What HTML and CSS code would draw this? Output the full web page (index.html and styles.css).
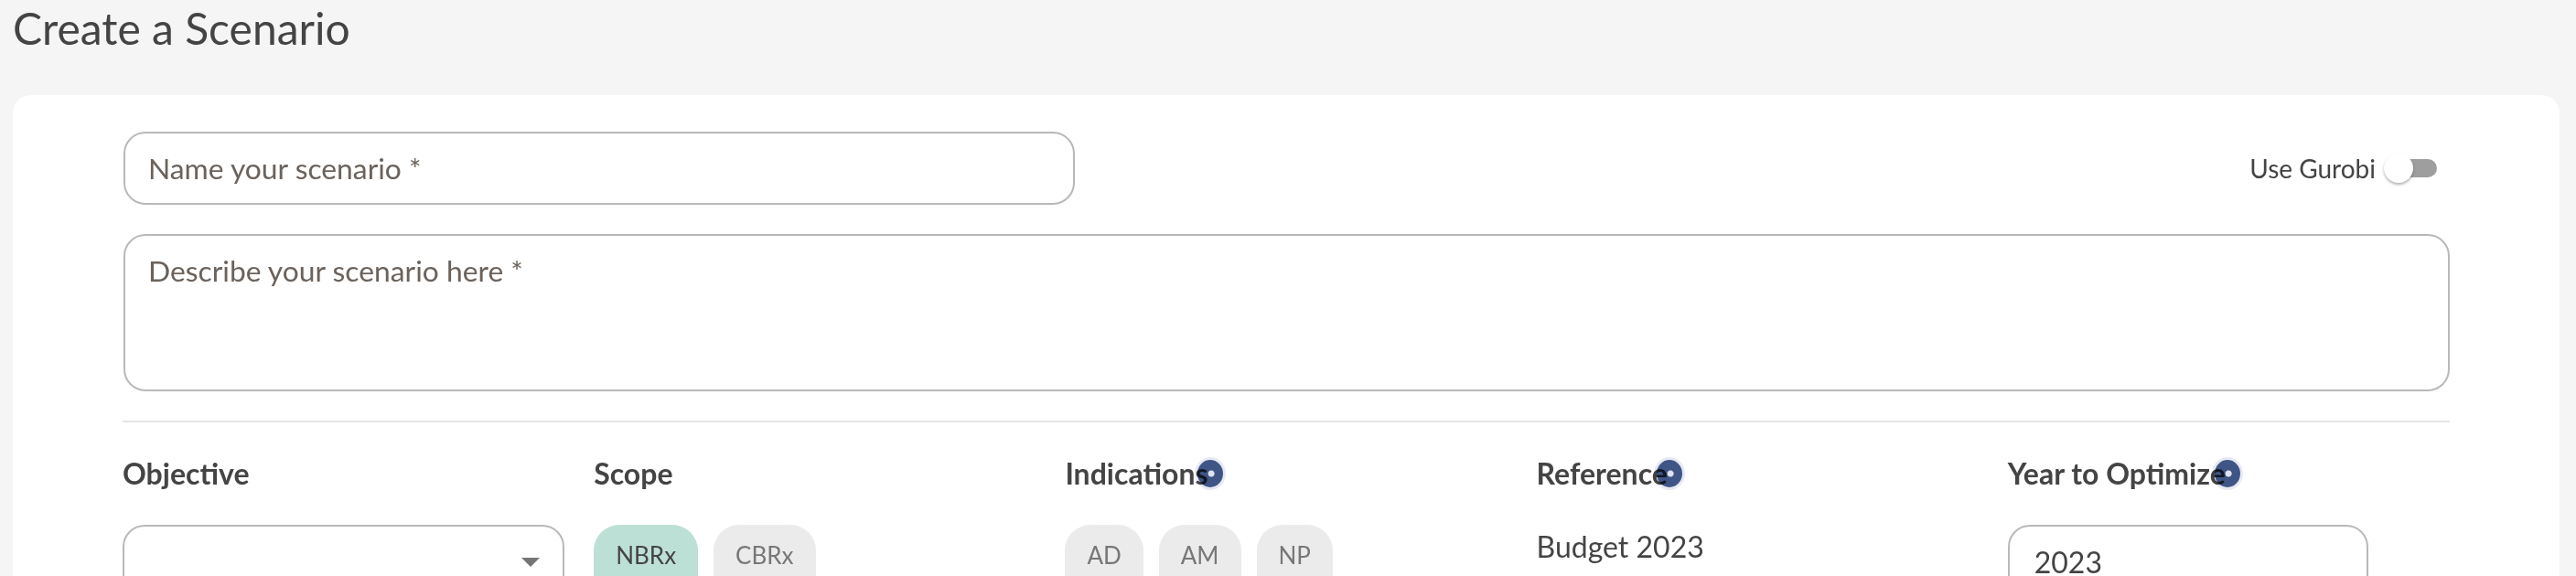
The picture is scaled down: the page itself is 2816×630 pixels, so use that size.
FILE: index.html
```html
<!DOCTYPE html>
<html lang="en">
<head>
<meta charset="utf-8">
<title>Create a Scenario</title>
<link rel="stylesheet" href="styles.css">
</head>
<body>
<h1 class="page-title">Create a Scenario</h1>
<main class="card">
  <div class="name-row">
    <div class="field name-field"><span class="placeholder">Name your scenario *</span></div>
    <div class="gurobi">
      <span class="gurobi-label">Use Gurobi</span>
      <span class="switch"><span class="thumb"></span></span>
    </div>
  </div>
  <div class="field desc-field"><span class="placeholder">Describe your scenario here *</span></div>
  <hr class="divider">
  <div class="options">
    <section class="col">
      <h2 class="col-label"><span class="label-text">Objective</span></h2>
      <div class="field select-field"><svg class="arrow" viewBox="0 0 20 10"><path d="M0 0h20L10 10z"/></svg></div>
    </section>
    <section class="col">
      <h2 class="col-label"><span class="label-text">Scope</span></h2>
      <div class="chips">
        <span class="chip chip-on">NBRx</span>
        <span class="chip">CBRx</span>
      </div>
    </section>
    <section class="col">
      <h2 class="col-label"><span class="label-text">Indications<i class="info"></i></span></h2>
      <div class="chips">
        <span class="chip">AD</span>
        <span class="chip">AM</span>
        <span class="chip">NP</span>
      </div>
    </section>
    <section class="col">
      <h2 class="col-label"><span class="label-text">Reference<i class="info"></i></span></h2>
      <div class="ref-value">Budget 2023</div>
    </section>
    <section class="col">
      <h2 class="col-label"><span class="label-text">Year to Optimize<i class="info"></i></span></h2>
      <div class="field year-field"><span class="year-value">2023</span></div>
    </section>
  </div>
</main>
</body>
</html>
```
FILE: styles.css
```css
* { box-sizing: border-box; }
html, body { margin: 0; height: 630px; overflow: hidden; }
body {
  background: #f5f5f5;
  font-family: Lato, "Liberation Sans", sans-serif;
  color: #444;
}
.page-title {
  margin: 0;
  padding: 2px 0 0 14px;
  height: 104px;
  font-size: 48px;
  line-height: 58px;
  font-weight: 400;
  color: #444;
}
.card {
  margin: 0 18px 0 14px;
  padding: 40px 120px 0;
  height: 600px;
  background: #fff;
  border-radius: 20px;
}
.field {
  border: 2px solid #b9b9b9;
  border-radius: 24px;
  background: #fff;
}
.placeholder { font-size: 31.8px; line-height: 36px; color: #6b625b; }
.name-row { display: flex; justify-content: space-between; align-items: center; padding-right: 14px; }
.name-field { width: 1040px; height: 80px; padding: 20px 25px; margin-left: 1px; }
.gurobi { display: flex; align-items: center; gap: 15px; }
.gurobi-label { font-size: 28px; line-height: 34px; }
.switch { position: relative; display: block; width: 52px; height: 20px; background: #9e9e9e; border-radius: 10px; }
.thumb {
  position: absolute; left: -6px; top: -6px;
  width: 32px; height: 32px; border-radius: 50%;
  background: #fff; box-shadow: 0 2px 3px rgba(0,0,0,.3);
}
.desc-field { margin: 32px 0 0 1px; height: 172px; padding: 20px 25px; }
.divider { margin: 32px 0 0; border: 0; border-top: 2px solid #e5e5e5; }
.options { display: grid; grid-template-columns: repeat(5, 515.2px); margin-top: 36px; }
.col-label { margin: 0 0 36px; font-size: 32px; line-height: 40px; font-weight: 700; color: #444; height: 40px; }
.label-text { position: relative; display: inline-block; }
.info {
  position: absolute; left: 100%; top: 50%;
  width: 28px; height: 30px; margin: -15px 0 0 -12px;
  border-radius: 50%;
  background: radial-gradient(circle at 54% 50%, #dfe3ee 0 3px, #3f5586 4px);
  box-shadow: 0 0 0 3px #e8eaf3;
  mix-blend-mode: multiply;
}
.select-field { position: relative; width: 483px; height: 100px; }
.arrow { position: absolute; right: 25px; top: 34px; width: 20px; height: 10px; fill: #757575; }
.chips { display: flex; gap: 17px; }
.chip {
  display: block; height: 100px; padding: 16px 24px 0;
  border-radius: 28px; background: #ebebeb; color: #777;
  font-size: 26px; line-height: 34px;
}
.chip-on { background: #bde0d6; color: #444; }
.ref-value { font-size: 32px; line-height: 40px; padding-top: 4px; }
.year-field { width: 394px; height: 100px; padding: 19px 27px; }
.year-value { font-size: 32px; line-height: 40px; }
```
